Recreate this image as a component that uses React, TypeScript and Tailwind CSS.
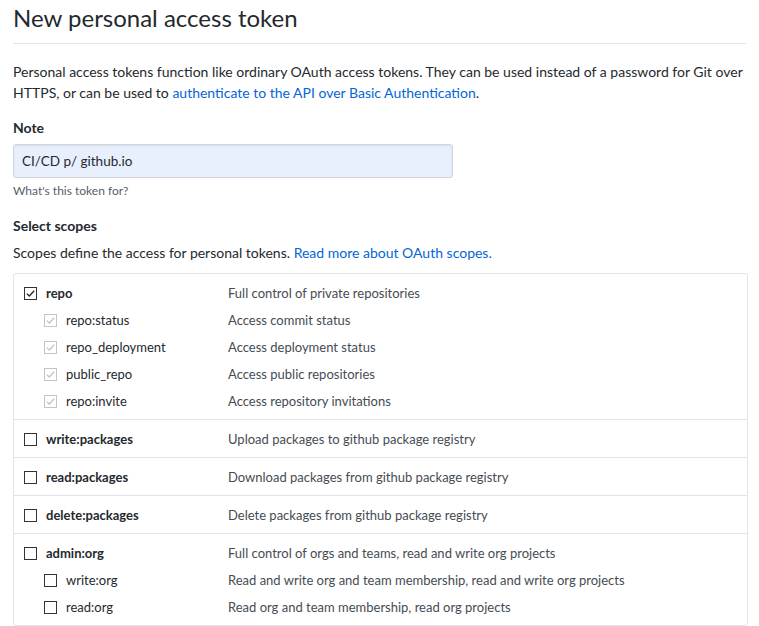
import React from 'react';

interface Scope {
  name: string;
  description: string;
  checked?: boolean;
  children?: Scope[];
}

const scopes: Scope[] = [
  {
    name: 'repo',
    description: 'Full control of private repositories',
    checked: true,
    children: [
      { name: 'repo:status', description: 'Access commit status', checked: true },
      { name: 'repo_deployment', description: 'Access deployment status', checked: true },
      { name: 'public_repo', description: 'Access public repositories', checked: true },
      { name: 'repo:invite', description: 'Access repository invitations', checked: true },
    ],
  },
  { name: 'write:packages', description: 'Upload packages to github package registry' },
  { name: 'read:packages', description: 'Download packages from github package registry' },
  { name: 'delete:packages', description: 'Delete packages from github package registry' },
  {
    name: 'admin:org',
    description: 'Full control of orgs and teams, read and write org projects',
    children: [
      { name: 'write:org', description: 'Read and write org and team membership, read and write org projects' },
      { name: 'read:org', description: 'Read org and team membership, read org projects' },
    ],
  },
];

const Checkbox: React.FC<{ checked?: boolean; disabled?: boolean }> = ({ checked, disabled }) => (
  <span
    className={`flex h-[13px] w-[13px] shrink-0 items-center justify-center border bg-white ${
      disabled ? 'border-[#c4c4c4]' : 'border-[#333333]'
    }`}
  >
    {checked && (
      <svg viewBox="0 0 11 11" className="h-[11px] w-[11px]">
        <path
          d="M1.8 5.6 L4.3 8 L9.2 2.8"
          fill="none"
          stroke={disabled ? '#c4c4c4' : '#222222'}
          strokeWidth="1.3"
        />
      </svg>
    )}
  </span>
);

const ScopeRow: React.FC<{ scope: Scope; sub?: boolean }> = ({ scope, sub }) => (
  <div className="flex h-[27px] items-center">
    <div className={`flex w-[204px] shrink-0 items-center gap-[9px] ${sub ? 'pl-[20px]' : ''}`}>
      <Checkbox checked={scope.checked} disabled={sub && scope.checked} />
      <span className={sub ? 'text-[#24292e]' : 'font-bold text-[#24292e]'}>{scope.name}</span>
    </div>
    <span className="text-[#464c53]">{scope.description}</span>
  </div>
);

export default function App() {
  return (
    <div
      className="px-[13px] text-[14px] leading-[21px] text-[#24292e]"
      style={{ fontFamily: 'Lato, "Open Sans", sans-serif' }}
    >
      <div className="border-b border-[#e1e4e8] pb-[7px]">
        <h1 className="text-[24px] leading-[36px] font-normal">New personal access token</h1>
      </div>

      <p className="mt-[17px]">
        Personal access tokens function like ordinary OAuth access tokens. They can be used instead of a password for Git over
        HTTPS, or can be used to{' '}
        <a className="text-[#0366d6]">authenticate to the API over Basic Authentication</a>.
      </p>

      <div className="mt-[14px]">
        <div className="font-bold">Note</div>
        <div className="mt-[6px] flex h-[34px] w-[440px] items-center rounded-[3px] border border-[#d1d5da] bg-[#e8f0fe] px-[8px] text-[13.5px] shadow-[inset_0_1px_2px_rgba(27,31,35,0.075)]">
          CI/CD p/ github.io
        </div>
        <p className="mt-[4px] text-[12px] leading-[18px] text-[#586069]">What's this token for?</p>
      </div>

      <div className="mt-[15px]">
        <div className="font-bold">Select scopes</div>
        <p className="mt-[6px]">
          Scopes define the access for personal tokens.{' '}
          <a className="text-[#0366d6]">Read more about OAuth scopes.</a>
        </p>
        <div className="mt-[10px] w-[735px] rounded-[3px] border border-[#e1e4e8] text-[13px]">
          {scopes.map((scope, i) => (
            <div
              key={scope.name}
              className={`pl-[10px] pt-[6px] pb-[4px] ${i > 0 ? 'border-t border-[#e1e4e8]' : ''}`}
            >
              <ScopeRow scope={scope} />
              {scope.children?.map(child => (
                <ScopeRow key={child.name} scope={child} sub />
              ))}
            </div>
          ))}
        </div>
      </div>
    </div>
  );
}
